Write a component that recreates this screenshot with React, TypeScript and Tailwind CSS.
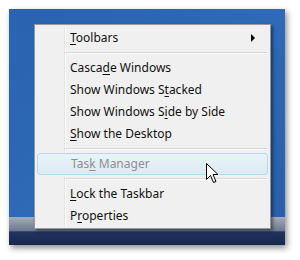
import React from "react";

const U = ({ children }: { children: React.ReactNode }) => (
  <span className="underline underline-offset-[2px] decoration-[1px]">{children}</span>
);

const Sep = () => (
  <div className="h-2 flex flex-col justify-center pl-[30px] pr-[3px]">
    <div className="h-px bg-[#d7d7d7]" />
    <div className="h-px bg-white" />
  </div>
);

const Item = ({ children, arrow }: { children: React.ReactNode; arrow?: boolean }) => (
  <div className="h-[22px] flex items-center pl-[35px] pr-[14px] text-[#111]">
    <span className="flex-1">{children}</span>
    {arrow && (
      <svg width="5" height="8" viewBox="0 0 5 8">
        <path d="M0 0 L4 4 L0 8 Z" fill="#000" />
      </svg>
    )}
  </div>
);

export default function App() {
  return (
    <div className="w-[300px] h-[260px] bg-white p-[9px]" style={{ fontFamily: '"Noto Sans", sans-serif' }}>
      <div className="relative w-[276px] h-[236px] flex flex-col bg-gradient-to-br from-[#2a63b0] via-[#2e6ab6] to-[#2a5ea8] shadow-[2px_3px_6px_rgba(0,0,0,0.45)]">
        <div className="flex-1" />
        <div className="h-[14px] bg-gradient-to-b from-[#a3acba] to-[#6c788e]" />
        <div className="h-[14px] bg-gradient-to-b from-[#22345e] to-[#17284f] border-t border-[#3a4a70]" />

        <div className="absolute left-[25px] top-[15px] w-[237px] h-[205px] bg-[#f0f0f0] border border-[#979797] shadow-[2px_2px_3px_rgba(0,0,0,0.45)] pt-[2px] text-[12px] leading-none">
          <div className="absolute left-[29px] top-[2px] bottom-[2px] w-px bg-[#e2e3e3]" />
          <div className="absolute left-[30px] top-[2px] bottom-[2px] w-px bg-white" />
          <div className="relative">
            <Item arrow>
              <U>T</U>oolbars
            </Item>
            <Sep />
            <Item>
              Casca<U>d</U>e Windows
            </Item>
            <Item>
              Show Windows S<U>t</U>acked
            </Item>
            <Item>
              Show Windows S<U>i</U>de by Side
            </Item>
            <Item>
              <U>S</U>how the Desktop
            </Item>
            <Sep />
            <div className="mx-[2px] h-[22px] flex items-center pl-[33px] rounded-[3px] border border-[#aedcee] bg-gradient-to-b from-[#eaf3f9] to-[#dbeaf3] text-[#8f8f8f]">
              <span>
                Tas<U>k</U> Manager
              </span>
            </div>
            <Sep />
            <Item>
              <U>L</U>ock the Taskbar
            </Item>
            <Item>
              P<U>r</U>operties
            </Item>
          </div>
        </div>

        <svg className="absolute left-[197px] top-[154px]" width="13" height="22" viewBox="0 0 13 22">
          <path d="M0.5 0.5 L0.5 16.5 L4.5 12.5 L7.5 19.5 L10 18.5 L7 11.5 L12 11.5 Z" fill="#fff" stroke="#000" strokeWidth="1" strokeLinejoin="miter" />
        </svg>
      </div>
    </div>
  );
}
